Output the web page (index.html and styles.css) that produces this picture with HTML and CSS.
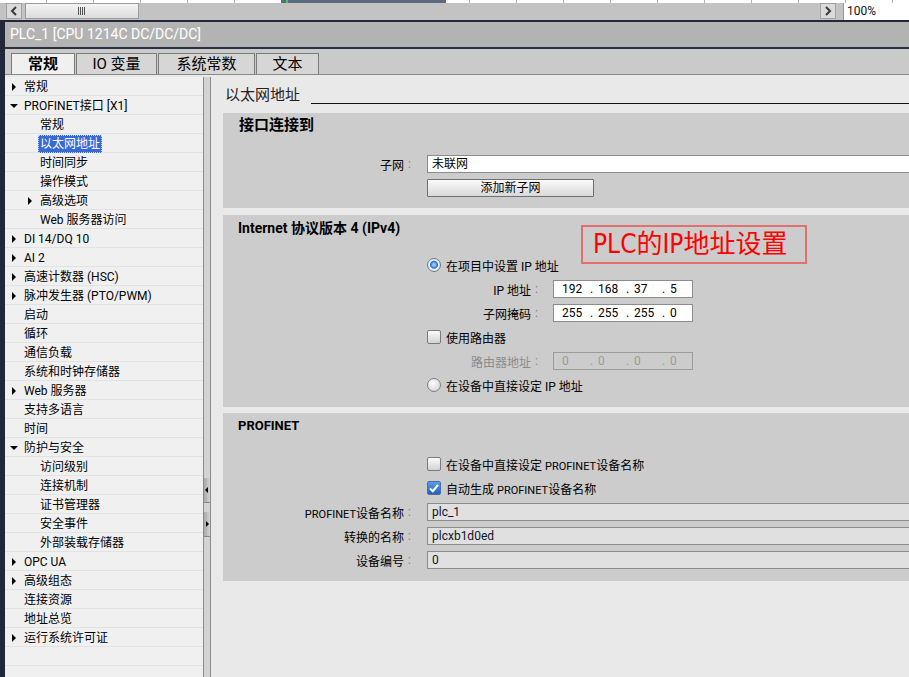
FILE: index.html
```html
<!DOCTYPE html>
<html lang="zh-CN">
<head>
<meta charset="utf-8">
<title>PLC_1 [CPU 1214C DC/DC/DC]</title>
<link rel="stylesheet" href="styles.css">
</head>
<body>
<div class="app">
  <div class="topstrip"><div class="slate"><span class="green"></span></div></div>
  <div class="hscroll">
    <div class="sbtn"><svg width="8" height="10" viewBox="0 0 8 10"><path d="M6 1 L2 5 L6 9" fill="none" stroke="#3a3a3a" stroke-width="2"/></svg></div>
    <div class="thumb"><svg width="8" height="8" viewBox="0 0 8 8"><path d="M0.5 0 V8 M2.5 0 V8 M4.5 0 V8 M6.5 0 V8" stroke="#555" stroke-width="1"/></svg></div>
    <div class="track"></div>
    <div class="sbtn"><svg width="8" height="10" viewBox="0 0 8 10"><path d="M2 1 L6 5 L2 9" fill="none" stroke="#3a3a3a" stroke-width="2"/></svg></div>
    <div class="zoombox">100%</div>
  </div>
  <div class="frame">
    <div class="titlebar">PLC_1 [CPU 1214C DC/DC/DC]</div>
    <div class="tabs">
      <div class="tab on t1">常规</div>
      <div class="tab t2">IO 变量</div>
      <div class="tab t3">系统常数</div>
      <div class="tab t4">文本</div>
    </div>
    <div class="main">
      <nav class="tree">
        <div class="row l0"><span class="tw"><b class="tri-r"></b></span><span class="tx">常规</span></div>
        <div class="row l0"><span class="tw"><b class="tri-d"></b></span><span class="tx">PROFINET接口 [X1]</span></div>
        <div class="row l1"><span class="tw"></span><span class="tx">常规</span></div>
        <div class="row l1"><span class="tw"></span><span class="tx sel">以太网地址</span></div>
        <div class="row l1"><span class="tw"></span><span class="tx">时间同步</span></div>
        <div class="row l1"><span class="tw"></span><span class="tx">操作模式</span></div>
        <div class="row l1"><span class="tw"><b class="tri-r"></b></span><span class="tx">高级选项</span></div>
        <div class="row l1"><span class="tw"></span><span class="tx">Web 服务器访问</span></div>
        <div class="row l0"><span class="tw"><b class="tri-r"></b></span><span class="tx">DI 14/DQ 10</span></div>
        <div class="row l0"><span class="tw"><b class="tri-r"></b></span><span class="tx">AI 2</span></div>
        <div class="row l0"><span class="tw"><b class="tri-r"></b></span><span class="tx">高速计数器 (HSC)</span></div>
        <div class="row l0"><span class="tw"><b class="tri-r"></b></span><span class="tx">脉冲发生器 (PTO/PWM)</span></div>
        <div class="row l0"><span class="tw"></span><span class="tx">启动</span></div>
        <div class="row l0"><span class="tw"></span><span class="tx">循环</span></div>
        <div class="row l0"><span class="tw"></span><span class="tx">通信负载</span></div>
        <div class="row l0"><span class="tw"></span><span class="tx">系统和时钟存储器</span></div>
        <div class="row l0"><span class="tw"><b class="tri-r"></b></span><span class="tx">Web 服务器</span></div>
        <div class="row l0"><span class="tw"></span><span class="tx">支持多语言</span></div>
        <div class="row l0"><span class="tw"></span><span class="tx">时间</span></div>
        <div class="row l0"><span class="tw"><b class="tri-d"></b></span><span class="tx">防护与安全</span></div>
        <div class="row l1"><span class="tw"></span><span class="tx">访问级别</span></div>
        <div class="row l1"><span class="tw"></span><span class="tx">连接机制</span></div>
        <div class="row l1"><span class="tw"></span><span class="tx">证书管理器</span></div>
        <div class="row l1"><span class="tw"></span><span class="tx">安全事件</span></div>
        <div class="row l1"><span class="tw"></span><span class="tx">外部装载存储器</span></div>
        <div class="row l0"><span class="tw"><b class="tri-r"></b></span><span class="tx">OPC UA</span></div>
        <div class="row l0"><span class="tw"><b class="tri-r"></b></span><span class="tx">高级组态</span></div>
        <div class="row l0"><span class="tw"></span><span class="tx">连接资源</span></div>
        <div class="row l0"><span class="tw"></span><span class="tx">地址总览</span></div>
        <div class="row l0"><span class="tw"><b class="tri-r"></b></span><span class="tx">运行系统许可证</span></div>
      </nav>
      <div class="splitter">
        <div class="split-btn"><b class="arr-l"></b></div>
        <div class="split-btn second"><b class="arr-r"></b></div>
      </div>
      <div class="content">
        <div class="heading"><span class="heading-text">以太网地址</span><span class="heading-line"></span></div>

        <section class="section s1">
          <div class="sec-title">接口连接到</div>
          <div class="rows">
            <div class="frow"><span class="lbl">子网</span><span class="colon">:</span><span class="inp">未联网</span></div>
            <div class="opt"><span class="btn">添加新子网</span></div>
          </div>
        </section>

        <section class="section s2">
          <div class="sec-title title-ipv4">Internet 协议版本 4 (IPv4)</div>
          <div class="rows">
            <div class="opt"><span class="radio on"></span><span class="otx">在项目中设置 IP 地址</span></div>
            <div class="frow"><span class="lbl wide">IP 地址</span><span class="colon wide">:</span><span class="inp ip"><span class="oct">192</span><span class="dot">.</span><span class="oct">168</span><span class="dot">.</span><span class="oct">37</span><span class="dot">.</span><span class="oct">5</span></span></div>
            <div class="frow"><span class="lbl wide">子网掩码</span><span class="colon wide">:</span><span class="inp ip"><span class="oct">255</span><span class="dot">.</span><span class="oct">255</span><span class="dot">.</span><span class="oct">255</span><span class="dot">.</span><span class="oct">0</span></span></div>
            <div class="opt"><span class="cb"></span><span class="otx">使用路由器</span></div>
            <div class="frow dis"><span class="lbl wide">路由器地址</span><span class="colon wide">:</span><span class="inp ip off"><span class="oct">0</span><span class="dot">.</span><span class="oct">0</span><span class="dot">.</span><span class="oct">0</span><span class="dot">.</span><span class="oct">0</span></span></div>
            <div class="opt"><span class="radio"></span><span class="otx">在设备中直接设定 IP 地址</span></div>
          </div>
        </section>

        <section class="section s3">
          <div class="sec-title title-pn">PROFINET</div>
          <div class="rows">
            <div class="opt"><span class="cb"></span><span class="otx">在设备中直接设定 <small>PROFINET</small>设备名称</span></div>
            <div class="opt"><span class="cb on"><svg width="12" height="12" viewBox="0 0 12 12"><path d="M2 6.5 L4.8 9.2 L10 3" fill="none" stroke="#fff" stroke-width="2"/></svg></span><span class="otx">自动生成 <small>PROFINET</small>设备名称</span></div>
            <div class="frow"><span class="lbl"><small>PROFINET</small>设备名称</span><span class="colon">:</span><span class="inp ro">plc_1</span></div>
            <div class="frow"><span class="lbl">转换的名称</span><span class="colon">:</span><span class="inp ro">plcxb1d0ed</span></div>
            <div class="frow"><span class="lbl">设备编号</span><span class="colon">:</span><span class="inp ro">0</span></div>
          </div>
        </section>

        <div class="note">PLC的IP地址设置</div>
      </div>
    </div>
  </div>
</div>
</body>
</html>
```
FILE: styles.css
```css
* { box-sizing: border-box; }
html, body { margin: 0; padding: 0; }
body {
  width: 909px;
  height: 677px;
  overflow: hidden;
  background: #e9e9e9;
  font-family: Roboto, "Noto Sans CJK SC", sans-serif;
  font-size: 12px;
  color: #000;
}
.app { width: 909px; height: 677px; display: flex; flex-direction: column; overflow: hidden; }

/* top strip + horizontal scrollbar */
.topstrip {
  height: 3px; flex: none; display: flex;
  background: #fff repeating-linear-gradient(to right, transparent 0 46px, #b5b5b5 46px 47px);
}
.slate { margin-left: 281px; width: 165px; height: 3px; background: #5b6b7b; display: flex; }
.green { margin-left: 5px; width: 2px; height: 3px; background: #3fcf3f; }
.hscroll { height: 17px; flex: none; background: #c3c3c3; display: flex; padding-left: 6px; }
.sbtn {
  width: 16px; height: 16px; flex: none;
  background: #dadada; border: 1px solid #a3a3a3;
  display: flex; align-items: center; justify-content: center;
}
.thumb {
  width: 114px; height: 16px; margin-left: 3px; flex: none;
  border: 1px solid #9b9b9b; background: linear-gradient(#f4f4f4, #dcdcdc);
  display: flex; align-items: center; justify-content: center;
}
.track { flex: 1; }
.zoombox {
  width: 66px; height: 17px; margin-left: 7px; flex: none;
  background: #fff; border-left: 1px solid #999;
  padding-left: 3px; line-height: 17px; font-size: 12px; color: #111;
}

/* window frame */
.frame {
  flex: 1; min-height: 0; display: flex; flex-direction: column;
  border-left: 5px solid #232838; border-top: 2px solid #232838;
}
.titlebar {
  height: 27px; flex: none; background: #b3b3b3;
  border-bottom: 2px solid #2b3040;
  color: #fff; font-size: 14px; line-height: 25px; padding-left: 5px;
}
.tabs {
  height: 26px; flex: none; background: #cacaca;
  border-bottom: 1px solid #8a8a8a;
  display: flex; align-items: flex-end; padding-left: 6px; gap: 1px;
}
.tab {
  height: 21px; border: 1px solid #7b7b7b; border-bottom: none;
  background: #d6d6d6; font-size: 15px; line-height: 20px; text-align: center;
}
.tab.on { background: #f0f0f0; font-weight: bold; }
.t1 { width: 64px; }
.t2 { width: 81px; }
.t3 { width: 97px; }
.t4 { width: 63px; }

.main { flex: 1; min-height: 0; display: flex; background: #e9e9e9; }

/* tree */
.tree {
  width: 198px; flex: none; margin-top: 2px;
  background: #f0f0f0 repeating-linear-gradient(to bottom, transparent 0 18px, #e2e2e2 18px 19px);
}
.row { height: 19px; display: flex; align-items: center; white-space: nowrap; padding-top: 1px; }
.l0 { padding-left: 3px; }
.l1 { padding-left: 19px; }
.tw { width: 12px; height: 8px; margin-right: 4px; flex: none; display: flex; align-items: center; }
.tri-r { margin-left: 4px; width: 0; height: 0; border-left: 4px solid #000; border-top: 4px solid transparent; border-bottom: 4px solid transparent; }
.tri-d { margin-left: 2px; width: 0; height: 0; border-top: 4px solid #000; border-left: 4px solid transparent; border-right: 4px solid transparent; }
.tx { line-height: 18px; }
.tx.sel {
  background: #3869d4; color: #fff; padding: 0 2px; margin-left: -2px;
  outline: 1px dotted #c8d4f0; outline-offset: -1px;
}

/* splitter */
.splitter {
  width: 8px; flex: none; margin-top: 2px;
  border-left: 1px solid #8a8a8a; border-right: 1px solid #8a8a8a;
  background: #d3d3d3; display: flex; flex-direction: column; padding-top: 401px;
}
.split-btn {
  height: 25px; border-bottom: 1px solid #888;
  background: linear-gradient(to right, #a8a8a8, #d2d2d2);
  display: flex; align-items: center;
}
.split-btn.second { margin-top: 9px; }
.arr-l { width: 0; height: 0; border-right: 3px solid #000; border-top: 3px solid transparent; border-bottom: 3px solid transparent; margin-left: 1px; }
.arr-r { width: 0; height: 0; border-left: 3px solid #000; border-top: 3px solid transparent; border-bottom: 3px solid transparent; margin-left: 2px; }

/* content */
.content { flex: 1; min-width: 0; padding-left: 12px; overflow: hidden; position: relative; }
.heading { display: flex; align-items: flex-end; height: 30px; padding-left: 2px; }
.heading-text { font-size: 15px; line-height: 20px; color: #222; flex: none; }
.heading-line { flex: 1; height: 1px; background: #111; margin: 0 0 1px 11px; }

.section { background: #cccccc; margin-right: -20px; padding-top: 3px; }
.s1 { margin-top: 8px; padding-top: 2px; padding-bottom: 11px; }
.s2 { margin-top: 7px; padding-bottom: 13px; }
.s3 { margin-top: 6px; padding-bottom: 12px; }
.sec-title { height: 20px; line-height: 20px; padding-left: 16px; font-size: 15px; font-weight: bold; white-space: nowrap; }
.title-ipv4 { font-size: 14px; padding-left: 15px; }
.title-pn { font-size: 13px; padding-left: 15px; }
.rows { display: flex; flex-direction: column; gap: 6px; }
.s1 .rows { margin-top: 20px; }
.s2 .rows { margin-top: 18px; }
.s3 .rows { margin-top: 19px; }

.frow { height: 18px; display: flex; align-items: center; white-space: nowrap; }
.lbl { width: 181px; flex: none; text-align: right; }
.lbl.wide { width: 308px; }
.colon { width: 23px; flex: none; padding-left: 4px; color: #8a7a6a; }
.colon.wide { width: 22px; }
small { font-size: 11px; }

.inp {
  flex: 1; height: 18px; border: 1px solid #8c8c8c; background: #fff;
  padding-left: 4px; line-height: 16px; white-space: nowrap;
}
.inp.ro { background: #e0e0e0; color: #141428; }
.inp.ip { flex: none; width: 140px; padding-left: 8px; display: flex; }
.inp.off { background: transparent; border-color: #9c9c9c; color: #9a9a9a; }
.oct { width: 28px; flex: none; }
.dot { width: 8px; flex: none; }
.dis .lbl, .dis .colon { color: #8b8b8b; }

.opt { height: 18px; display: flex; align-items: center; padding-left: 204px; white-space: nowrap; }
.otx { margin-left: 5px; }
.btn {
  width: 167px; height: 18px; border: 1px solid #707070; border-radius: 1px;
  background: linear-gradient(#fafafa, #d9d9d9);
  text-align: center; line-height: 16px;
}
.radio {
  width: 14px; height: 14px; flex: none; border-radius: 50%;
  border: 1px solid #7f7f7f;
  background: radial-gradient(circle at 40% 35%, #fdfdfd, #cdcdcd);
}
.radio.on {
  border-color: #667a92;
  background: radial-gradient(circle at 50% 48%, #9cccff 0 1px, #1f6fd6 3.5px, #f6f6f6 4.5px, #d6d6d6 7px);
}
.cb {
  width: 14px; height: 14px; flex: none; border-radius: 2px;
  border: 1px solid #7a7a7a; background: linear-gradient(#fbfbfb, #d3d3d3);
  display: flex; align-items: center; justify-content: center;
}
.cb.on { border-color: #4a6f9e; background: linear-gradient(#5c9cea, #1f5fbf); }

/* annotation overlay */
.note {
  position: absolute; left: 370px; top: 150px;
  width: 226px; height: 39px;
  border: 2px solid #e46f6f;
  color: #ff0000;
  font-family: "DejaVu Sans Condensed", "DejaVu Sans", "Noto Sans CJK SC", sans-serif;
  font-stretch: condensed;
  font-size: 26px; line-height: 35px; padding-left: 10px; white-space: nowrap;
}
```
